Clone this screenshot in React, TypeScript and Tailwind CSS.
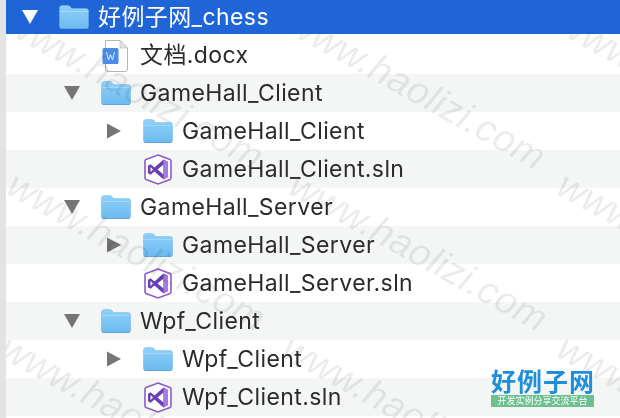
const Folder = () => (
  <svg width="30" height="24" viewBox="0 0 30 24" className="shrink-0">
    <defs>
      <linearGradient id="fg" x1="0" y1="0" x2="0" y2="1">
        <stop offset="0" stopColor="#8fd0f8" />
        <stop offset="1" stopColor="#6dbbf0" />
      </linearGradient>
    </defs>
    <path d="M0.5 3 Q0.5 0.5 3 0.5 H9 Q10.5 0.5 11.5 2 L12.5 3.5 H27.5 Q29.5 3.5 29.5 5.5 V22 Q29.5 24 27.5 24 H2.5 Q0.5 24 0.5 22 Z" fill="#5da6dc" />
    <path d="M0.5 3 Q0.5 0.5 3 0.5 H9 Q10.5 0.5 11.5 2 L12.5 3.5 H27.5 Q29.5 3.5 29.5 5.5 V21.5 Q29.5 23 27.5 23 H2.5 Q0.5 23 0.5 21.5 Z" fill="url(#fg)" />
    <path d="M0.5 6.5 H29.5" stroke="#a6dcfb" strokeWidth="0.8" />
  </svg>
);

const Doc = () => (
  <svg width="27" height="32" viewBox="0 0 27 32" className="shrink-0">
    <path d="M3.5 0.5 H18 L25.5 8 V29 Q25.5 31.5 23 31.5 H6 Q3.5 31.5 3.5 29 Z" fill="#fff" stroke="#b5b5b5" />
    <path d="M18 0.5 V8 H25.5 Z" fill="#e4e4e4" stroke="#bdbdbd" strokeWidth="0.7" />
    <rect x="0.5" y="8" width="16" height="16" rx="1.5" fill="#4a8be6" />
    <path d="M4.5 12 L6.5 20 L8.5 14.5 L10.5 20 L12.5 12" fill="none" stroke="#dbe9fb" strokeWidth="1" />
  </svg>
);

const VS = () => (
  <svg width="28" height="31" viewBox="0 0 28 31" className="shrink-0">
    <path d="M14 1 L26 5.5 Q27 6 27 7 V24 Q27 25 26 25.5 L14 30 L2 25.5 Q1 25 1 24 V7 Q1 6 2 5.5 Z" fill="#fff" stroke="#8a5cc9" strokeWidth="1.6" />
    <path d="M19.5 5.5 L24 8 V23 L19.5 25.5 L10.5 17.5 L6.5 20.8 L4 19.3 V11.7 L6.5 10.2 L10.5 13.5 Z M19.5 10.5 L13.5 15.5 L19.5 20.5 Z M6.5 13 V18 L9 15.5 Z" fill="#6a3fb5" fillRule="evenodd" />
    <path d="M19.5 5.5 L24 8 V23 L19.5 25.5 Z" fill="#a57be0" />
  </svg>
);

const Tri = ({ dir, color }: { dir: "down" | "right"; color: string }) => (
  <svg width="18" height="16" viewBox="0 0 18 16" className="shrink-0">
    {dir === "down" ? <path d="M1 1 H17 L9 15 Z" fill={color} /> : <path d="M2 0.5 L16 8 L2 15.5 Z" fill={color} />}
  </svg>
);

function Level1() {
  return (
    <div className="relative z-20 flex h-[34px] items-center bg-[#1f65d8] pl-[15px] text-white">
      <Tri dir="down" color="#ffffff" />
      <div className="ml-5"><Folder /></div>
      <span className="ml-[9px]">好例子网_chess</span>
    </div>
  );
}

function FolderRow({ name, shade }: { name: string; shade?: boolean }) {
  return (
    <div className={`flex h-[38px] items-center pl-[57px] ${shade ? "bg-[#f4f5f5]" : "bg-white"}`}>
      <Tri dir="down" color="#757575" />
      <div className="ml-5"><Folder /></div>
      <span className="ml-[9px] mt-[1px]">{name}</span>
    </div>
  );
}

function SubFolderRow({ name, shade }: { name: string; shade?: boolean }) {
  return (
    <div className={`flex h-[38px] items-center pl-[99px] ${shade ? "bg-[#f4f5f5]" : "bg-white"}`}>
      <Tri dir="right" color="#757575" />
      <div className="ml-[20px]"><Folder /></div>
      <span className="ml-[9px] mt-[1px]">{name}</span>
    </div>
  );
}

function SlnRow({ name, shade }: { name: string; shade?: boolean }) {
  return (
    <div className={`flex h-[38px] items-center pl-[138px] ${shade ? "bg-[#f4f5f5]" : "bg-white"}`}>
      <VS />
      <span className="ml-[10px] mt-[1px]">{name}</span>
    </div>
  );
}

const marks = [
  "left-[12px] top-[3px]",
  "left-[294px] top-[3px]",
  "left-[564px] top-[3px]",
  "left-[14px] top-[165px]",
  "left-[296px] top-[165px]",
  "left-[564px] top-[165px]",
  "left-[7px] top-[328px]",
  "left-[289px] top-[328px]",
  "left-[564px] top-[328px]",
];

export default function App() {
  return (
    <div className="relative h-[418px] w-[620px] overflow-hidden border-l-[6px] border-[#e3e3e3] bg-white font-['Inter','Noto_Sans_CJK_SC',sans-serif] text-[23px] leading-none tracking-[0.4px] text-[#2b2b2b] blur-[0.3px]">
      <Level1 />
      <div className="flex h-[40px] items-center pl-[96px] pt-[3px]">
        <Doc />
        <span className="ml-[11px]">文档.docx</span>
      </div>
      <FolderRow name="GameHall_Client" shade />
      <SubFolderRow name="GameHall_Client" />
      <SlnRow name="GameHall_Client.sln" shade />
      <FolderRow name="GameHall_Server" />
      <SubFolderRow name="GameHall_Server" shade />
      <SlnRow name="GameHall_Server.sln" />
      <FolderRow name="Wpf_Client" shade />
      <SubFolderRow name="Wpf_Client" />
      <SlnRow name="Wpf_Client.sln" shade />

      {marks.map((m) => (
        <span
          key={m}
          className={`pointer-events-none absolute z-10 origin-top-left rotate-[29deg] whitespace-nowrap font-['Liberation_Sans',sans-serif] text-[38px] italic tracking-[0.5px] text-black/[0.08] ${m}`}
        >
          www.haolizi.com
        </span>
      ))}

      <div className="absolute left-[485px] top-[366px] z-20 flex w-[103px] flex-col items-stretch tracking-normal">
        <span className="whitespace-nowrap text-center font-['Noto_Sans_CJK_SC',sans-serif] text-[25px] font-bold leading-[29px] tracking-[1px] text-[#1f8fdc]">好例子网</span>
        <span className="h-[12px] whitespace-nowrap bg-[#6fc08f] text-center font-['Noto_Sans_CJK_SC',sans-serif] text-[9px] leading-[12px] text-white">开发实例分享交流平台</span>
      </div>
    </div>
  );
}
